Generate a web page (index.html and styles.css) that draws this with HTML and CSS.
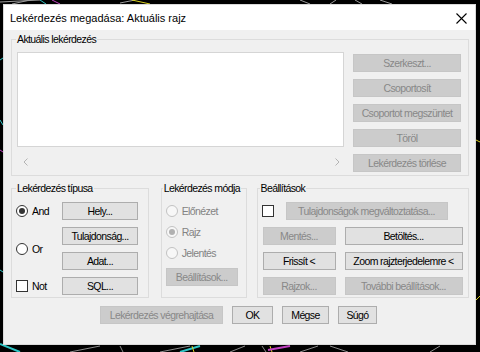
FILE: index.html
```html
<!DOCTYPE html>
<html lang="hu">

<head>
    <meta charset="UTF-8">
    <title>Lekérdezés megadása</title>
    <link rel="stylesheet" href="styles.css">
</head>

<body>
    <!-- rajz a háttérben -->
    <svg class="cad" width="480" height="352" viewBox="0 0 480 352">
        <path d="M0 2 L40 0 M12 4 L30 0 M300 0 L310 4 M330 4 L336 0 M355 0 L362 4 M380 0 L392 4 M120 3 L135 0" stroke="#9a9a9a" stroke-width="1" fill="none"/>
        <path d="M40 0 L46 4 M0 60 L3 58 M0 120 L3 125 M0 270 L3 272" stroke="#2fc4c4" stroke-width="1" fill="none"/>
        <path d="M52 0 L60 4 M0 150 L3 152" stroke="#c040c0" stroke-width="1" fill="none"/>
        <path d="M132 0 L150 4 M476 140 L480 142 M476 300 L480 296" stroke="#d8d020" stroke-width="1" fill="none"/>
        <path d="M70 352 L100 346 M160 352 L190 346 M120 346 L123 352 M230 352 L245 346 M262 346 L266 352 M300 352 L318 346 M330 346 L348 352 M430 352 L440 346" stroke="#8a8a8a" stroke-width="1" fill="none"/>
        <path d="M180 352 L200 346 M0 344 L20 352" stroke="#2fc4c4" stroke-width="2" fill="none"/>
        <path d="M192 346 L194 352 M270 346 L272 352" stroke="#d8d020" stroke-width="1" fill="none"/>
        <path d="M268 350 L290 346" stroke="#c040c0" stroke-width="2" fill="none"/>
    </svg>

    <div class="dialog">
        <div class="titlebar">
            <span class="title">Lekérdezés megadása: Aktuális rajz</span>
            <svg class="close" width="11" height="11" viewBox="0 0 11 11">
                <path d="M0.5 0.5 L10.5 10.5 M10.5 0.5 L0.5 10.5" stroke="#000" stroke-width="1.1" fill="none"/>
            </svg>
        </div>

        <div class="content">
            <fieldset class="grp grp-current">
                <legend>Aktuális lekérdezés</legend>
                <div class="current-body">
                    <div class="list-col">
                        <div class="listbox"></div>
                        <div class="hscroll">
                            <svg width="5" height="8" viewBox="0 0 5 8"><path d="M4.5 0.5 L1 4 L4.5 7.5" stroke="#b4b4b4" fill="none"/></svg>
                            <svg width="5" height="8" viewBox="0 0 5 8"><path d="M0.5 0.5 L4 4 L0.5 7.5" stroke="#b4b4b4" fill="none"/></svg>
                        </div>
                    </div>
                    <div class="btn-col">
                        <button class="btn off">Szerkeszt...</button>
                        <button class="btn off">Csoportosít</button>
                        <button class="btn off">Csoportot megszüntet</button>
                        <button class="btn off">Töröl</button>
                        <button class="btn off">Lekérdezés törlése</button>
                    </div>
                </div>
            </fieldset>

            <div class="groups">
                <fieldset class="grp grp-type">
                    <legend>Lekérdezés típusa</legend>
                    <div class="type-grid">
                        <label class="opt"><span class="radio on"></span>And</label>
                        <button class="btn">Hely...</button>
                        <label class="opt opt-or"><span class="radio"></span>Or</label>
                        <button class="btn">Tulajdonság...</button>
                        <button class="btn">Adat...</button>
                        <label class="opt"><span class="check"></span>Not</label>
                        <button class="btn">SQL...</button>
                    </div>
                </fieldset>

                <fieldset class="grp grp-mode">
                    <legend>Lekérdezés módja</legend>
                    <div class="mode-list">
                        <label class="opt dim"><span class="radio"></span>Előnézet</label>
                        <label class="opt dim"><span class="radio on"></span>Rajz</label>
                        <label class="opt dim"><span class="radio"></span>Jelentés</label>
                        <button class="btn off btn-mode">Beállítások...</button>
                    </div>
                </fieldset>

                <fieldset class="grp grp-set">
                    <legend>Beállítások</legend>
                    <div class="set-top">
                        <span class="check"></span>
                        <button class="btn off btn-wide">Tulajdonságok megváltoztatása...</button>
                    </div>
                    <div class="set-grid">
                        <button class="btn off">Mentés...</button>
                        <button class="btn">Betöltés...</button>
                        <button class="btn">Frissít &lt;</button>
                        <button class="btn">Zoom rajzterjedelemre &lt;</button>
                        <button class="btn off">Rajzok...</button>
                        <button class="btn off">További beállítások...</button>
                    </div>
                </fieldset>
            </div>

            <div class="actions">
                <button class="btn off act-run">Lekérdezés végrehajtása</button>
                <button class="btn act-ok">OK</button>
                <button class="btn act-cancel">Mégse</button>
                <button class="btn act-help">Súgó</button>
            </div>
        </div>
    </div>
</body>

</html>
```

FILE: styles.css
```css
* {
    padding: 0;
    margin: 0;
    box-sizing: border-box;
}

body {
    width: 480px;
    height: 352px;
    background-color: #000;
    position: relative;
    overflow: hidden;
    font-family: "Liberation Sans", Arial, sans-serif;
    font-size: 10.5px;
    letter-spacing: -0.6px;
    color: #000;
}

.cad {
    position: absolute;
    left: 0;
    top: 0;
}

.dialog {
    position: absolute;
    left: 3px;
    top: 4px;
    width: 473px;
    height: 341px;
    background-color: #f0f0f0;
    border: 1px solid #dadada;
}

.titlebar {
    height: 25px;
    background-color: #fff;
    display: flex;
    align-items: center;
    justify-content: space-between;
    padding: 0 8px 0 6px;
}

.title {
    font-size: 11px;
    letter-spacing: 0;
    padding-top: 1px;
}

.close {
    display: block;
    margin-top: 2px;
}

.content {
    padding: 3px 6px 0 7px;
}

/* group boxes */
.grp {
    border: 1px solid #dcdcdc;
    min-width: 0;
}

.grp legend {
    font-size: 10.5px;
    line-height: 13px;
    padding: 0 1px;
    white-space: nowrap;
}

.grp-current {
    height: 143px;
    padding: 6px 7px 0 5px;
}

.grp-current legend {
    margin-left: -1px;
}

.current-body {
    display: flex;
    gap: 9px;
}

.listbox {
    width: 327px;
    height: 95px;
    background-color: #fff;
    border: 1px solid #d5d5d5;
}

.hscroll {
    display: flex;
    justify-content: space-between;
    padding: 11px 4px 0 6px;
}

.hscroll svg {
    display: block;
}

.btn-col {
    display: flex;
    flex-direction: column;
    gap: 7px;
    margin-top: 2px;
}

.btn-col .btn {
    width: 108px;
}

/* buttons */
.btn {
    height: 18px;
    font-family: "Liberation Sans", Arial, sans-serif;
    font-size: 10.5px;
    letter-spacing: -0.6px;
    background-color: #e1e1e1;
    border: 1px solid #adadad;
    color: #000;
    white-space: nowrap;
    overflow: hidden;
    display: flex;
    align-items: center;
    justify-content: center;
}

.btn.off {
    background-color: #cccccc;
    border-color: #c6c6c6;
    color: #888;
}

/* lower row */
.groups {
    display: flex;
    margin-top: 6px;
}

.groups .grp {
    height: 116px;
}

.grp-type {
    width: 138px;
    padding: 7px 0 0 4px;
}

.grp-mode {
    width: 86px;
    margin-left: 12px;
    padding: 7px 0 0 4px;
}

.grp-mode legend {
    margin-left: -3px;
}

.grp-set {
    width: 213px;
    margin-left: 10px;
    padding: 7px 0 0 4px;
}

.grp-set legend {
    margin-left: -2px;
}

.opt {
    display: flex;
    align-items: center;
    gap: 4px;
    height: 18px;
}

.opt.dim {
    color: #838383;
}

.radio {
    width: 12px;
    height: 12px;
    border-radius: 50%;
    border: 1px solid #333;
    background-color: #fff;
    display: flex;
    align-items: center;
    justify-content: center;
}

.radio.on::after {
    content: "";
    width: 6px;
    height: 6px;
    border-radius: 50%;
    background-color: #333;
}

.dim .radio {
    border-color: #c2c2c2;
    background-color: #f7f7f7;
}

.dim .radio.on::after {
    background-color: #b0b0b0;
}

.check {
    width: 12px;
    height: 12px;
    border: 1px solid #333;
    background-color: #fff;
}

.type-grid {
    display: grid;
    grid-template-columns: 46px 76px;
    grid-auto-rows: 18px;
    row-gap: 7px;
}

.opt-or {
    grid-row: 2 / span 2;
    align-self: center;
}

.mode-list {
    display: flex;
    flex-direction: column;
    gap: 3px;
}

.btn-mode {
    width: 72px;
    margin-top: 3px;
}

.set-top {
    display: flex;
    align-items: center;
    gap: 12px;
}

.btn-wide {
    width: 162px;
}

.set-grid {
    display: grid;
    grid-template-columns: 73px 118px;
    grid-auto-rows: 18px;
    gap: 7px 9px;
    margin: 7px 0 0 1px;
}

/* dialog buttons */
.actions {
    display: flex;
    gap: 9px;
    margin: 8px 0 0 89px;
}

.act-run {
    width: 123px;
}

.act-ok {
    width: 41px;
}

.act-cancel {
    width: 47px;
}

.act-help {
    width: 39px;
}
```
